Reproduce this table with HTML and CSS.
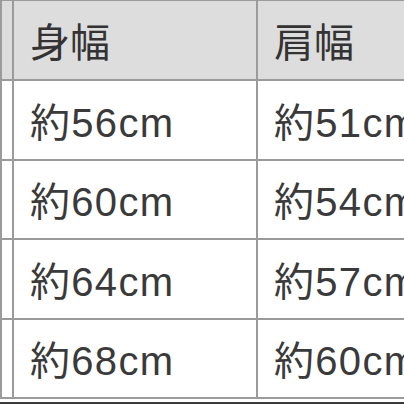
FILE: index.html
```html
<!DOCTYPE html>
<html lang="ja">
<head>
<meta charset="utf-8">
<link rel="stylesheet" href="styles.css">
</head>
<body>
<div class="frame">
<table class="sizes">
  <colgroup><col class="c0"><col class="c1"><col class="c2"></colgroup>
  <thead>
    <tr><th></th><th>身幅</th><th>肩幅</th></tr>
  </thead>
  <tbody>
    <tr><td></td><td>約56cm</td><td>約51cm</td></tr>
    <tr><td></td><td>約60cm</td><td>約54cm</td></tr>
    <tr><td></td><td>約64cm</td><td>約57cm</td></tr>
    <tr><td></td><td>約68cm</td><td>約60cm</td></tr>
  </tbody>
</table>
</div>
<div class="edge"></div>
</body>
</html>
```
FILE: styles.css
```css
html, body {
  margin: 0;
  padding: 0;
  background: #ffffff;
  width: 404px;
  height: 404px;
  overflow: hidden;
}
.frame {
  height: 402px;
  overflow: hidden;
}
.sizes {
  border-collapse: collapse;
  table-layout: fixed;
  width: 500px;
  margin-top: -1px;
  font-family: "Liberation Sans", "Noto Sans CJK JP", sans-serif;
  font-size: 40px;
  color: #3a3a3a;
}
.c0 { width: 12px; }
.c1 { width: 244px; }
.c2 { width: 244px; }
.sizes th,
.sizes td {
  border: 2px solid #9b9b9b;
  padding: 0 0 0 16px;
  height: 79.5px;
  text-align: left;
  font-weight: normal;
  white-space: nowrap;
  box-sizing: border-box;
}
.sizes td {
  letter-spacing: 1.3px;
}
.sizes th {
  background: #dddddd;
  height: 80px;
  color: #333333;
}
.sizes th:first-child,
.sizes td:first-child {
  padding: 0;
}
.edge {
  height: 2px;
  background: #3a3a3a;
}
```
